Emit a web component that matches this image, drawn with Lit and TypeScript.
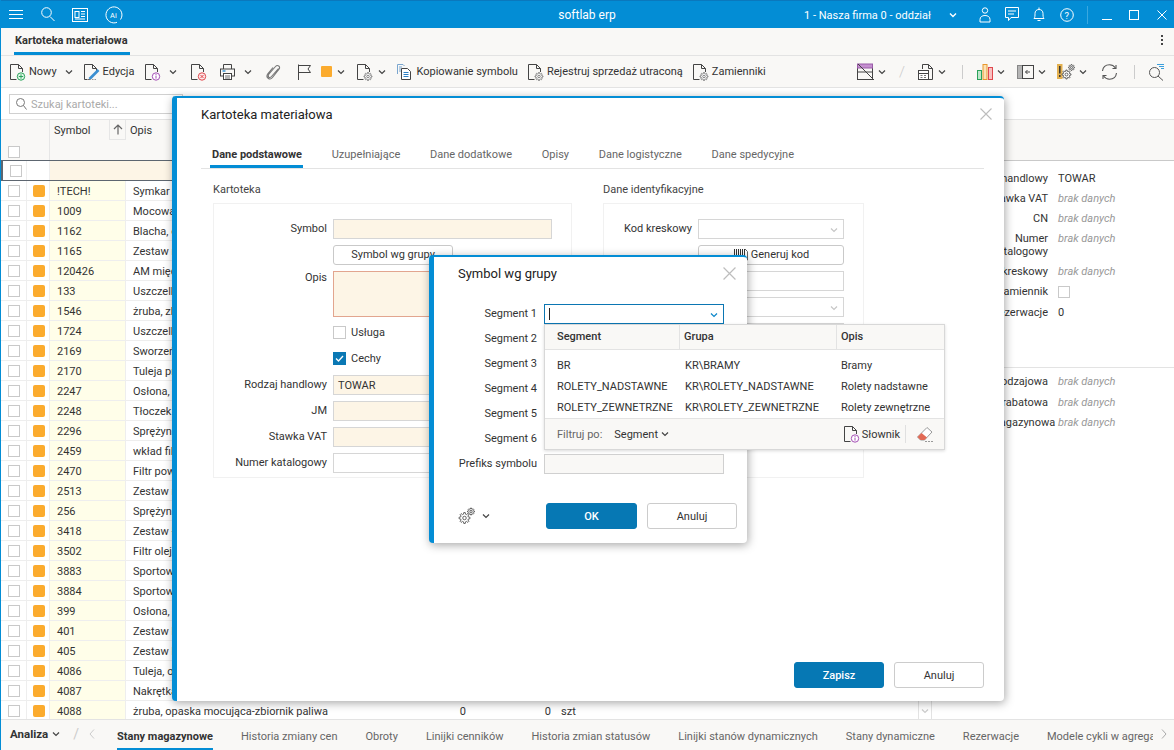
import { LitElement, html, css, svg } from "lit";
import { customElement } from "lit/decorators.js";

const s = (w: number, h: number, body: unknown, cls = "") =>
  html`<svg class="ic ${cls}" width=${w} height=${h} viewBox="0 0 ${w} ${h}" fill="none">${body}</svg>`;

const page = svg`<path d="M7.5 16.5H1.5V1.5H9.500L13.500 5.500V9M9.500 1.500V5.500H13.500" stroke="#444"/>`;
const gearD = (cx: number, cy: number, r: number) => {
  const pts: string[] = [];
  const n = 8;
  for (let k = 0; k < n; k++) {
    const a = (k / n) * Math.PI * 2;
    const d = Math.PI / n;
    const p = (rad: number, ang: number) => `${(cx + rad * Math.cos(ang)).toFixed(2)} ${(cy + rad * Math.sin(ang)).toFixed(2)}`;
    pts.push(p(r * 0.72, a - d * 0.65), p(r, a - d * 0.35), p(r, a + d * 0.35), p(r * 0.72, a + d * 0.65));
  }
  return "M" + pts.join("L") + "Z";
};
const gear = (x: number, y: number, r = 4, c = "#777") =>
  svg`<path d=${gearD(x, y, r)} stroke=${c} stroke-width=".9" fill="#fff"/><circle cx=${x} cy=${y} r=${r * 0.32} stroke=${c} stroke-width=".9"/>`;
const chevPath = svg`<path d="M1 1.5L4 4.500L7 1.500" stroke="#444" stroke-width="1.2"/>`;
const chev = html`<svg class="chev" width="8" height="6" viewBox="0 0 8 6" fill="none">${chevPath}</svg>`;

const icons: Record<string, unknown> = {
  add: s(17, 18, svg`${page}<circle cx="12" cy="13.500" r="3.700" stroke="#2aa35a" fill="#e4f7ea"/><path d="M12 11.300v4.400M9.800 13.500h4.400" stroke="#2aa35a"/>`),
  edit: s(17, 18, svg`${page}<path d="M6.500 16L15.500 7" stroke="#3b8fd1" stroke-width="2.600"/><path d="M4 16.500h9" stroke="#999" stroke-dasharray="1.500 1"/>`),
  info: s(17, 18, svg`${page}<circle cx="12" cy="13.500" r="3.700" stroke="#a34fb5" fill="#fff"/><path d="M12 12.600v3M12 10.900v1" stroke="#a34fb5"/>`),
  del: s(17, 18, svg`${page}<circle cx="12" cy="13.500" r="3.700" stroke="#e0484d" fill="#fde8e8"/><path d="M10.500 12l3 3M13.500 12l-3 3" stroke="#e0484d"/>`),
  print: s(17, 18, svg`<path d="M4.500 6V1.500H12.500V6" stroke="#444"/><rect x="1.500" y="6" width="14" height="7" stroke="#444"/><path d="M3.500 8h3" stroke="#2c8fd1" stroke-width="1.400"/><rect x="4.500" y="10.500" width="8" height="6" fill="#fff" stroke="#444"/><path d="M6 13h5M6 15h5" stroke="#444" stroke-width=".8"/>`),
  clip: s(17, 18, svg`<path d="M13.500 5.500L6.500 13.500C4.500 15.800 2 13.500 4 11L10.500 3.500C12.500 1.200 16 3.500 14 6.200L7.500 14.500C4.800 17.800.2 14.500 2.800 10.800L8 4.500" stroke="#777" stroke-width="1.100"/>`),
  flag: s(15, 18, svg`<path d="M1.500 17V1.500" stroke="#444"/><path d="M1.500 2.500H13.500L11 6L13.500 9.500H1.500" stroke="#444"/>`),
  docGear: s(17, 18, svg`${page}${gear(12, 13.500)}`),
  copy: s(17, 18, svg`<path d="M1.500 11V1.500H7L8.500 3" stroke="#7aa6cf"/><path d="M3 4h3M3 6h2M3 8h2" stroke="#7aa6cf"/><path d="M5.500 16.500V5.500H11.500L14.500 8.500V16.500Z" stroke="#444" fill="#fff"/><path d="M7.500 9.500h5M7.500 11.500h5M7.500 13.500h5" stroke="#2c7fc4"/>`),
  noView: s(18, 18, svg`<rect x=".5" y="2.500" width="15" height="14" stroke="#444"/><rect x=".5" y="1" width="15" height="4" fill="#c58fd0" stroke="#9a5ca8"/><path d="M.5 9h15" stroke="#444"/><path d="M1 1L17 17" stroke="#444"/>`),
  docTable: s(17, 18, svg`<path d="M5.500 6V1.500H11.500L15.500 5.500V16.500H12" stroke="#444"/><path d="M11.500 1.500V5.500H15.500" stroke="#444"/><rect x="1.500" y="7.500" width="10" height="9" fill="#fff" stroke="#444"/><path d="M1.500 10.500h10" stroke="#444"/><path d="M3.500 12.500h2M7 12.500h2M3.500 14.500h2M7 14.500h2" stroke="#777"/>`),
  chart: s(17, 18, svg`<rect x=".5" y="7.500" width="4" height="9" fill="#bfe6cb" stroke="#2aa35a"/><rect x="6" y="1.500" width="4" height="15" fill="#fce2b5" stroke="#e8982e"/><rect x="11.500" y="4.500" width="4" height="12" fill="#f8c0c0" stroke="#e0484d"/>`),
  panel: s(17, 18, svg`<rect x=".5" y="2.500" width="5" height="13" fill="#b5b5b5" stroke="#888"/><rect x="5.500" y="2.500" width="11" height="13" stroke="#444"/><path d="M13 9H8.500M10.500 7L8.500 9L10.500 11" stroke="#444"/>`),
  warn: s(18, 18, svg`<rect x="0" y="1" width="5.500" height="15" fill="#e3b04f"/><path d="M2.800 3v7.500M2.800 12v2" stroke="#333" stroke-width="1.500"/>${gear(9.500, 11.500, 4.500, "#555")}${gear(14.500, 4.500, 3, "#555")}`),
  refresh: s(17, 18, svg`<path d="M1.500 8C2 4 5 1.800 8.500 1.800C11 1.800 13 3 14.500 5M15.500 10C15 14 12 16.200 8.500 16.200C6 16.200 4 15 2.500 13" stroke="#555" stroke-width="1.100"/><path d="M11.500 5.500H15V2M5.500 12.500H2V16" stroke="#555" stroke-width="1.100"/>`),
  searchList: s(17, 18, svg`<circle cx="6.500" cy="9.500" r="5" stroke="#555"/><path d="M10 13L15 17.500" stroke="#555"/><path d="M9 1.500h7M11 3.500h5M13 5.500h3" stroke="#3b9fdc"/>`),
};

const leftTools = [
  { i: "add", t: "Nowy", c: 1, ml: "nowy" },
  { i: "edit", t: "Edycja", c: 0, ml: "m10" },
  { i: "info", t: "", c: 1, ml: "m10" },
  { i: "del", t: "", c: 0, ml: "m13" },
  { i: "print", t: "", c: 1, ml: "m12" },
  { i: "clip", t: "", c: 0, ml: "m13" },
  { i: "flag", t: "", c: 0, ml: "m15" },
  { i: "orange", t: "", c: 1, ml: "m9 tight" },
  { i: "docGear", t: "", c: 1, ml: "m11 tight" },
  { i: "copy", t: "Kopiowanie symbolu", c: 0, ml: "m10" },
  { i: "docGear", t: "Rejestruj sprzedaż utraconą", c: 0, ml: "m9" },
  { i: "docGear", t: "Zamienniki", c: 0, ml: "m9" },
];

const rightTools: [unknown, string][] = [
  [icons.noView, ""], [chev, "m3"],
  [html`<span class="slash">/</span>`, "m13"],
  [icons.docTable, "m12"], [chev, "m4"],
  [html`<span class="vsep"></span>`, "m16"],
  [icons.chart, "m14"], [chev, "m3"],
  [icons.panel, "m12"], [chev, "m4"],
  [icons.warn, "m11"], [chev, "m4"],
  [icons.refresh, "m14"],
  [html`<span class="vsep"></span>`, "m16"],
  [icons.searchList, "m13"],
];

const rows: [string, string][] = [
  ["!TECH!", "Symkar uszczelka"], ["1009", "Mocowanie silnika"], ["1162", "Blacha, osłona"], ["1165", "Zestaw naprawczy"],
  ["120426", "AM między osłona"], ["133", "Uszczelka pokrywy"], ["1546", "żruba, zbiornik"], ["1724", "Uszczelka"],
  ["2169", "Sworzeń wahacza"], ["2170", "Tuleja przednia"], ["2247", "Osłona, wał"], ["2248", "Tłoczek hamulca"],
  ["2296", "Sprężyna"], ["2459", "wkład filtra"], ["2470", "Filtr powietrza"], ["2513", "Zestaw naprawczy"],
  ["256", "Sprężyna"], ["3418", "Zestaw łożysk"], ["3502", "Filtr oleju"], ["3883", "Sportowy tłumik"],
  ["3884", "Sportowy filtr"], ["399", "Osłona, łańcuch"], ["401", "Zestaw kół"], ["405", "Zestaw kół"],
  ["4086", "Tuleja, oś"], ["4087", "Nakrętka"], ["4088", "żruba, opaska mocująca-zbiornik paliwa"],
];

const props1: [string, string, boolean][] = [
  ["Rodzaj handlowy", "TOWAR", false], ["Stawka VAT", "brak danych", true], ["CN", "brak danych", true],
  ["Numer katalogowy", "brak danych", true], ["Kod kreskowy", "brak danych", true], ["Zamiennik", "", false], ["Rezerwacje", "0", false],
];
const props2 = ["Grupa rodzajowa", "Grupa rabatowa", "Grupa magazynowa"];
const bottomTabs = ["Historia zmiany cen", "Obroty", "Linijki cenników", "Historia zmian statusów", "Linijki stanów dynamicznych", "Stany dynamiczne", "Rezerwacje"];
const modalTabs = ["Uzupełniające", "Dane dodatkowe", "Opisy", "Dane logistyczne", "Dane spedycyjne"];
const ddRows = [
  ["BR", "KR\\BRAMY", "Bramy"],
  ["ROLETY_NADSTAWNE", "KR\\ROLETY_NADSTAWNE", "Rolety nadstawne"],
  ["ROLETY_ZEWNETRZNE", "KR\\ROLETY_ZEWNETRZNE", "Rolety zewnętrzne"],
];

const closeX = (size: number) =>
  html`<svg class="close" width=${size} height=${size} viewBox="0 0 12 12" fill="none"><path d="M.5.5l11 11M11.500.5l-11 11" stroke="#bdbdbd" stroke-width="1.100"/></svg>`;

@customElement("app-root")
export class AppRoot extends LitElement {
  static styles = css`
    :host { display: block; width: 1174px; height: 750px; font: 11px Roboto, sans-serif; color: #333; }
    * { box-sizing: border-box; }
    .app { position: relative; width: 1174px; height: 750px; overflow: hidden; display: flex; flex-direction: column; background: #fff; border-left: 1px solid #038dd5; }
    .ic, .chev, .close { flex: none; display: block; }

    .title { height: 28px; margin-left: -1px; background: #038dd5; border-top: 1px solid #0a78bd; display: grid; grid-template-columns: 1fr auto 1fr; align-items: center; color: #fff; }
    .tl, .tr { display: flex; align-items: center; }
    .tl { padding-left: 9px; gap: 17px; }
    .tl .ham { margin-right: 1px; }
    .tc { font-size: 12px; padding-top: 1px; }
    .tr { justify-content: flex-end; padding-right: 7px; }
    .firm { font-size: 11px; padding-top: 1px; margin-right: 18px; }
    .mr14 { margin-right: 14px; } .mr15 { margin-right: 15px; } .mr17 { margin-right: 17px; } .mr18 { margin-right: 18px; } .mr22 { margin-right: 22px; }
    .tsep { width: 1px; height: 18px; background: #3aa8e0; margin: 0 14px 0 13px; }

    .tabbar { height: 28px; background: #f9f8f6; border-bottom: 1px solid #e3e3e3; display: flex; align-items: flex-end; justify-content: space-between; padding-left: 13px; }
    .tab-main { font-weight: 700; font-size: 11px; color: #333; padding: 0 1px; height: 27px; line-height: 25px; border-bottom: 3px solid #038dd5; width: 116px; white-space: nowrap; }
    .dots { display: flex; flex-direction: column; gap: 2px; margin: 0 11px 10px 0; }
    .dots i { width: 2px; height: 2px; background: #444; }

    .toolbar { height: 32px; background: #f9f8f6; border-bottom: 1px solid #e3e3e3; display: flex; align-items: center; padding-left: 8px; }
    .tool { display: flex; align-items: center; gap: 3px; white-space: nowrap; color: #333; flex: none; }
    .tool .chev { margin-left: 5px; }
    .tool.tight .chev { margin-left: 2px; }
    .tool.nowy .chev { margin-left: 5px; }
    .tright .tool .chev { margin-left: 0; }
    .m3 { margin-left: 3px; } .m4 { margin-left: 4px; } .m9 { margin-left: 9px; } .m10 { margin-left: 10px; } .m11 { margin-left: 11px; } .m12 { margin-left: 12px; } .m13 { margin-left: 13px; } .m14 { margin-left: 14px; } .m15 { margin-left: 15px; } .m16 { margin-left: 16px; }
    .orange { width: 11px; height: 11px; border-radius: 1px; background: #fbab2e; }
    .tright { margin-left: auto; display: flex; align-items: center; padding-right: 9px; }
    .slash { color: #ccc; font-size: 15px; width: 6px; font-weight: 300; display: block; }
    .vsep { width: 1px; height: 14px; background: #ccc; display: block; }

    .main { flex: 1; min-height: 0; display: flex; flex-direction: column; }
    .searchrow { height: 32px; flex: none; border-bottom: 1px solid #e3e3e3; padding: 6px 0 0 8px; }
    .search { width: 174px; height: 20px; border: 1px solid #d0d0d0; display: flex; align-items: center; gap: 4px; padding-left: 6px; color: #aaa; }
    .content { flex: 1; min-height: 0; display: flex; }
    .gridwrap { width: 931px; flex: none; display: flex; flex-direction: column; overflow: hidden; position: relative; }
    .r { display: grid; grid-template-columns: 26px 23px 76px 300px 44px 85px 1fr; height: 20px; align-items: stretch; border-bottom: 1px solid #eee; flex: none; }
    .r > div { display: flex; align-items: center; white-space: nowrap; overflow: hidden; border-right: 1px solid #eee; padding-top: 1px; }
    .r > div.open { border-right: none; }
    .cbc { padding-left: 7px; }
    .cb { width: 12px; height: 12px; border: 1px solid #c9c9c9; background: #fff; flex: none; display: block; }
    .sq { width: 12px; height: 12px; background: #fbab2e; border-radius: 2px; margin-left: 6px; }
    .sym { background: #fffee9; padding-left: 7px; }
    .desc { padding-left: 7px; }
    .num { justify-content: flex-end; padding-right: 4px; }
    .jm { padding-left: 6px; padding-right: 0; }
    .head { height: 41px; background: #f9f8f6; display: grid; grid-template-columns: 26px 23px 59px 17px 1fr; border-bottom: 1px solid #e3e3e3; flex: none; }
    .head > div { border-right: 1px solid #e6e6e6; padding-top: 4px; }
    .head .hcb { padding: 26px 0 0 7px; border-right: none; }
    .head .hsym { padding-left: 4px; border-left: 1px solid #e6e6e6; border-right: none; margin-left: -1px; }
    .head .sort { height: 20px; border-left: 1px solid #e6e6e6; border-bottom: 1px solid #e6e6e6; padding: 4px 0 0 3px; }
    .head .hop { padding-left: 4px; border-right: none; }
    .filter { height: 21px; border-top: 1px solid #5d6670; border-bottom: 1px solid #5d6670; border-left: 2px solid #5d6670; margin-top: -1px; grid-template-columns: 24px 23px 1fr; }
    .filter > div { border-right: 1px solid #eee; }
    .filter .fill { background: #fdf5e6; border-right: none; }
    .bodyrows { flex: 1; min-height: 0; overflow: hidden; display: flex; flex-direction: column; }
    .sb { position: absolute; right: 0; top: 0; bottom: 0; width: 14px; border-left: 1px solid #e3e3e3; border-right: 1px solid #e3e3e3; background: #fff; display: flex; align-items: flex-end; justify-content: center; padding-bottom: 5px; }
    .sb .chev path { stroke: #ccc; }
    .side { flex: 1; min-width: 0; }
    .sidehead { height: 41px; background: #f9f8f6; border-bottom: 1px solid #c9c9c9; }
    .props { padding: 11px 0 0 32px; display: grid; grid-template-columns: 84px 1fr; column-gap: 10px; row-gap: 7px; line-height: 13px; align-items: start; }
    .props .l { text-align: right; }
    .na { font-style: italic; color: #999; }
    .props2 { margin-top: 48px; border-top: 1px solid #e3e3e3; padding: 7px 0 0 26px; grid-template-columns: 90px 1fr; row-gap: 7.500px; }
    .props2 .l { white-space: nowrap; }
    .props .cb { margin: 1px 0; }

    .bottom { height: 31px; flex: none; background: #f9f8f6; border-top: 1px solid #e3e3e3; display: flex; align-items: stretch; padding-left: 9px; position: relative; }
    .ana { font-weight: 700; display: flex; align-items: center; gap: 4px; font-size: 11.500px; padding-bottom: 2px; }
    .bslash { color: #ccc; align-self: center; margin: 0 0 2px 13px; font-size: 14px; }
    .blt { align-self: center; margin: 0 22px 2px 10px; }
    .btabs { flex: 1; min-width: 0; display: flex; gap: 28px; overflow: hidden; white-space: nowrap; margin-right: 21px; }
    .btab { color: #666; line-height: 33px; font-size: 11px; flex: none; }
    .btab.on { font-weight: 700; color: #333; border-bottom: 3px solid #038dd5; height: 31px; }
    .brt { position: absolute; right: 7px; top: 9px; }

    .modal { position: absolute; background: #fff; border-left: 5px solid #038dd5; border-top: 2px solid #038dd5; border-radius: 4px; box-shadow: 1px 2px 10px rgba(0,0,0,.35); display: flex; flex-direction: column; }
    .m1 { left: 171px; top: 96px; width: 832px; height: 605px; padding: 0 20px 13px 24px; }
    .m2 { left: 428px; top: 255px; width: 318px; height: 288px; padding: 0 10px 14px 19px; }
    .mhead { display: flex; justify-content: space-between; align-items: center; }
    .m1 .mhead { height: 32px; }
    .m1 .mhead .close { margin-right: -8px; }
    .mtitle { font-size: 13px; color: #222; }
    .m2 .mhead { height: 32px; padding: 0 1px 0 5px; }
    .mtabs { display: flex; gap: 29.700px; margin-top: 18px; padding: 0 0 0 11px; border-bottom: 1px solid #e3e3e3; height: 21px; color: #666; white-space: nowrap; }
    .mtab.on { font-weight: 700; color: #333; height: 20px; border-bottom: 3px solid #038dd5; margin-left: -2px; padding: 0 1px 0 2px; margin-right: -1px; }
    .cols { display: grid; grid-template-columns: 359px 261px; gap: 31px; margin: 14px 0 0 12px; }
    .sect { color: #444; height: 20px; }
    .box { border: 1px solid #f1f1f1; height: 275px; display: grid; row-gap: 6px; align-content: start; padding-top: 15px; }
    .lbox { grid-template-columns: 113px 219px; column-gap: 6px; }
    .rbox { grid-template-columns: 88px 146px; column-gap: 6px; }
    .lb { text-align: right; line-height: 20px; white-space: nowrap; }
    .lb.top { line-height: 13px; }
    .fld { height: 20px; border: 1px solid #d6d6d6; background: #fff; position: relative; display: flex; align-items: center; padding-left: 4px; }
    .fld.req { background: #fdf5e6; }
    .fld.area { height: 46px; border-color: #e2a58f; }
    .fld.ro { background: #f9f8f6; border-color: #d0d0d0; }
    .fld > .chev { position: absolute; right: 5px; top: 7px; }
    .fld > .chev path { stroke: #c6c6c6; }
    .btnf { height: 20px; border: 1px solid #c9c9c9; border-radius: 3px; background: #fff; display: flex; align-items: center; justify-content: center; gap: 2px; padding-bottom: 1px; }
    .wsmall { width: 120px; }
    .chk { display: flex; align-items: center; gap: 5px; height: 20px; padding-bottom: 1px; }
    .chk .cb { width: 13px; height: 13px; }
    .cb.on { background: #0a78b4; border-color: #0a78b4; }
    .cb svg { display: block; }
    .mfoot { margin-top: auto; display: flex; justify-content: flex-end; gap: 10px; align-items: center; }
    .btn { width: 90px; height: 26px; border-radius: 3px; display: flex; align-items: center; justify-content: center; border: 1px solid #ccc; background: #fff; flex: none; }
    .btn.pri { background: #0678b4; border-color: #0678b4; color: #fff; font-weight: 500; }

    .m2grid { display: grid; grid-template-columns: 84px 180px; column-gap: 7px; row-gap: 5px; margin-top: 15px; }
    .m2grid .fld.focus { border-color: #0b76b3; }
    .m2grid .fld.focus > .chev path { stroke: #0b86c9; }
    .caret { width: 1px; height: 12px; background: #222; }
    .m2 .mfoot { justify-content: flex-start; gap: 10px; }
    .gearb { display: flex; align-items: center; gap: 7px; width: 83px; padding-left: 5px; }
    .m2 .btn.pri { width: 91px; }

    .dd { position: absolute; left: -1px; top: 19px; width: 401px; height: 126px; background: #fff; border: 1px solid #d8d8d8; box-shadow: 0 1px 3px rgba(0,0,0,.15); z-index: 2; display: flex; flex-direction: column; }
    .ddr { display: grid; grid-template-columns: 135px 157px 1fr; }
    .ddh { height: 25px; background: #f9f8f6; border-bottom: 1px solid #e3e3e3; line-height: 24px; font-weight: 500; }
    .ddh span { border-right: 1px solid #e3e3e3; padding-left: 12px; }
    .ddh span + span { padding-left: 4px; }
    .ddh span:last-child { border: none; }
    .ddbody { flex: 1; padding-top: 5px; }
    .ddb { height: 21px; line-height: 21px; white-space: nowrap; }
    .ddb span { padding-left: 12px; }
    .ddb span + span { padding-left: 5px; }
    .ddb span:last-child { padding-left: 4px; }
    .ddf { height: 32px; background: #f9f8f6; border-top: 1px solid #e3e3e3; display: flex; align-items: center; padding-left: 12px; }
    .ddf .fl { color: #666; margin-right: 12px; }
    .ddf .seg { display: flex; align-items: center; gap: 3px; }
    .ddf .dict { margin-left: auto; display: flex; align-items: center; gap: 2px; }
    .ddf .sp { width: 1px; height: 18px; background: #e0e0e0; margin: 0 10px 0 5px; }
    .ddf .er { margin-right: 11px; }
  `;

  private tool(t: { i: string; t: string; c: number; ml: string }) {
    const icon = t.i === "orange" ? html`<span class="orange"></span>` : icons[t.i];
    return html`<div class="tool ${t.ml}">${icon}${t.t ? html`<span>${t.t}</span>` : ""}${t.c ? chev : ""}</div>`;
  }

  private titleBar() {
    return html`<div class="title">
      <div class="tl">
        <svg class="ham" width="14" height="12" viewBox="0 0 14 12"><path d="M0 1.500h14M0 5.500h14M0 9.500h14" stroke="#fff"/></svg>
        <svg width="14" height="15" viewBox="0 0 14 15" fill="none"><circle cx="5.500" cy="5.500" r="4.800" stroke="#fff"/><path d="M9 9.500l4.500 4.500" stroke="#fff"/></svg>
        <svg width="16" height="14" viewBox="0 0 16 14" fill="none"><rect x=".5" y=".5" width="15" height="13" stroke="#fff"/><rect x="3" y="3.500" width="4" height="6" stroke="#fff"/><path d="M9 3.500h4M9 6h4M9 8.500h4M3 11h10" stroke="#fff"/></svg>
        <svg width="18" height="18" viewBox="0 0 18 18" fill="none"><path d="M12 16.300A8 8 0 1 1 15.500 13.500" stroke="#fff"/><text x="5" y="12" font-size="7.500" font-family="Roboto" fill="#fff">Ai</text></svg>
      </div>
      <div class="tc">softlab erp</div>
      <div class="tr">
        <span class="firm">1 - Nasza firma 0 - oddział</span>
        <svg class="mr22" width="8" height="6" viewBox="0 0 8 6" fill="none"><path d="M1 1.500L4 4.500L7 1.500" stroke="#fff" stroke-width="1.400"/></svg>
        <svg class="mr14" width="12" height="16" viewBox="0 0 12 16" fill="none"><circle cx="6" cy="3.500" r="2.700" stroke="#fff"/><path d="M1 15v-2.500C1 10 3 8.500 6 8.500s5 1.500 5 4V15z" stroke="#fff"/></svg>
        <svg class="mr14" width="14" height="15" viewBox="0 0 14 15" fill="none"><path d="M.5.5h13v10H6L3.500 13.500v-3h-3z" stroke="#fff"/><path d="M3 4h8M3 7h6" stroke="#fff"/></svg>
        <svg class="mr15" width="12" height="15" viewBox="0 0 12 15" fill="none"><path d="M1 11.500c1-1 1-3 1-5 0-2.500 1.500-4 4-4s4 1.500 4 4c0 2 0 4 1 5zM6 .5v2M4.500 13.500h3" stroke="#fff"/></svg>
        <svg width="14" height="14" viewBox="0 0 14 14" fill="none"><circle cx="7" cy="7" r="6.300" stroke="#fff"/><text x="4.500" y="10.500" font-size="9.500" font-family="Roboto" fill="#fff">?</text></svg>
        <span class="tsep"></span>
        <svg class="mr17" width="10" height="10" viewBox="0 0 10 10"><path d="M0 9.500h10" stroke="#fff"/></svg>
        <svg class="mr18" width="10" height="10" viewBox="0 0 10 10" fill="none"><rect x=".5" y=".5" width="9" height="9" stroke="#fff"/></svg>
        <svg width="10" height="10" viewBox="0 0 10 10"><path d="M.5.500l9 9M9.500.500l-9 9" stroke="#fff"/></svg>
      </div>
    </div>`;
  }

  private toolbar() {
    return html`<div class="toolbar">
      ${leftTools.map((t) => this.tool(t))}
      <div class="tright">
        ${rightTools.map(([c, m]) => html`<div class="tool ${m}">${c}</div>`)}
      </div>
    </div>`;
  }

  private grid() {
    return html`<div class="gridwrap">
      <div class="head">
        <div class="hcb"><span class="cb"></span></div>
        <div></div>
        <div class="hsym">Symbol</div>
        <div class="sort"><svg width="10" height="11" viewBox="0 0 10 11" fill="none"><path d="M5 10.500V1M1 5l4-4 4 4" stroke="#666" stroke-width="1.200"/></svg></div>
        <div class="hop">Opis</div>
      </div>
      <div class="r filter"><div class="cbc"><span class="cb"></span></div><div></div><div class="fill"></div></div>
      <div class="bodyrows">
        ${rows.map(([a, b], i) => html`<div class="r">
          <div class="cbc"><span class="cb"></span></div>
          <div><span class="sq"></span></div>
          <div class="sym">${a}</div>
          <div class="desc open">${b}</div>
          <div class="num open">${i === rows.length - 1 ? "0" : ""}</div>
          <div class="num open">${i === rows.length - 1 ? "0" : ""}</div>
          <div class="jm open">${i === rows.length - 1 ? "szt" : ""}</div>
        </div>`)}
      </div>
      <div class="sb">${chev}</div>
    </div>`;
  }

  private side() {
    return html`<div class="side">
      <div class="sidehead"></div>
      <div class="props">
        ${props1.map(([l, v, na], i) => html`<div class="l">${l}</div>${i === 5 ? html`<span class="cb"></span>` : html`<div class=${na ? "na" : ""}>${v}</div>`}`)}
      </div>
      <div class="props props2">
        ${props2.map((l) => html`<div class="l">${l}</div><div class="na">brak danych</div>`)}
      </div>
    </div>`;
  }

  private bottom() {
    return html`<div class="bottom">
      <div class="ana">Analiza ${chev}</div>
      <span class="bslash">/</span>
      <svg class="blt" width="6" height="10" viewBox="0 0 6 10" fill="none"><path d="M5 .5L1 5l4 4.500" stroke="#ccc"/></svg>
      <div class="btabs">
        <div class="btab on">Stany magazynowe</div>
        ${bottomTabs.map((t) => html`<div class="btab">${t}</div>`)}
        <div class="btab">Modele cykli w agregacie</div>
      </div>
      <svg class="brt" width="6" height="10" viewBox="0 0 6 10" fill="none"><path d="M1 .5L5 5 1 9.500" stroke="#aaa"/></svg>
    </div>`;
  }

  private modal1() {
    return html`<div class="modal m1">
      <div class="mhead"><div class="mtitle">Kartoteka materiałowa</div>${closeX(12)}</div>
      <div class="mtabs"><div class="mtab on">Dane podstawowe</div>${modalTabs.map((t) => html`<div class="mtab">${t}</div>`)}</div>
      <div class="cols">
        <div>
          <div class="sect">Kartoteka</div>
          <div class="box lbox">
            <div class="lb">Symbol</div><div class="fld req"></div>
            <div></div><div class="btnf wsmall">Symbol wg grupy</div>
            <div class="lb top">Opis</div><div class="fld req area"></div>
            <div></div><div class="chk"><span class="cb"></span>Usługa</div>
            <div></div><div class="chk"><span class="cb on"><svg width="11" height="11" viewBox="0 0 11 11" fill="none"><path d="M2 5.500L4.500 8L9 3" stroke="#fff" stroke-width="1.300"/></svg></span>Cechy</div>
            <div class="lb">Rodzaj handlowy</div><div class="fld req">TOWAR</div>
            <div class="lb">JM</div><div class="fld req"></div>
            <div class="lb">Stawka VAT</div><div class="fld req"></div>
            <div class="lb">Numer katalogowy</div><div class="fld"></div>
          </div>
        </div>
        <div>
          <div class="sect">Dane identyfikacyjne</div>
          <div class="box rbox">
            <div class="lb">Kod kreskowy</div><div class="fld">${chev}</div>
            <div></div><div class="btnf"><svg width="16" height="15" viewBox="0 0 16 15" fill="none"><path d="M1.500 2v10M3.500 2v10M5.500 2v10M7.500 2v10M9.500 2v10M11.500 2v10" stroke="#333"/><path d="M12 2l2.500 2.500V13h-3" stroke="#666"/></svg>Generuj kod</div>
            <div></div><div class="fld"></div>
            <div></div><div class="fld">${chev}</div>
            <div></div><div class="fld"></div>
          </div>
        </div>
      </div>
      <div class="mfoot"><div class="btn pri">Zapisz</div><div class="btn">Anuluj</div></div>
    </div>`;
  }

  private modal2() {
    return html`<div class="modal m2">
      <div class="mhead"><div class="mtitle">Symbol wg grupy</div>${closeX(13)}</div>
      <div class="m2grid">
        <div class="lb">Segment 1</div>
        <div class="fld focus"><span class="caret"></span>${chev}
          <div class="dd">
            <div class="ddr ddh"><span>Segment</span><span>Grupa</span><span>Opis</span></div>
            <div class="ddbody">${ddRows.map((r) => html`<div class="ddr ddb"><span>${r[0]}</span><span>${r[1]}</span><span>${r[2]}</span></div>`)}</div>
            <div class="ddf">
              <span class="fl">Filtruj po:</span><span class="seg">Segment ${chev}</span>
              <span class="dict">${icons.info}Słownik</span><span class="sp"></span>
              <svg class="er" width="17" height="17" viewBox="0 0 17 17" fill="none"><path d="M1.500 11L11 1.500l5 4.500-7.500 8H4.500z" fill="#fff" stroke="#999"/><path d="M1.500 11l4-4 5.500 4.500-2.500 2.500H4.500z" fill="#e26a55"/><path d="M9 15.500h8" stroke="#999" stroke-dasharray="2 1"/></svg>
            </div>
          </div>
        </div>
        ${[2, 3, 4, 5, 6].map((n) => html`<div class="lb">Segment ${n}</div><div class="fld"></div>`)}
        <div class="lb">Prefiks symbolu</div><div class="fld ro"></div>
      </div>
      <div class="mfoot">
        <div class="gearb"><svg width="17" height="18" viewBox="0 0 17 18" fill="none">${gear(6.500, 11, 5.500, "#555")}${gear(13, 4.500, 3.500, "#555")}</svg>${chev}</div>
        <div class="btn pri">OK</div><div class="btn">Anuluj</div>
      </div>
    </div>`;
  }

  render() {
    return html`<div class="app">
      ${this.titleBar()}
      <div class="tabbar"><div class="tab-main">Kartoteka materiałowa</div><div class="dots"><i></i><i></i><i></i></div></div>
      ${this.toolbar()}
      <div class="main">
        <div class="searchrow"><div class="search"><svg width="11" height="12" viewBox="0 0 11 12" fill="none"><circle cx="4.500" cy="4.500" r="4" stroke="#777"/><path d="M7.500 7.500l3 4" stroke="#777"/></svg>Szukaj kartoteki...</div></div>
        <div class="content">${this.grid()}${this.side()}</div>
      </div>
      ${this.bottom()}
      ${this.modal1()}
      ${this.modal2()}
    </div>`;
  }
}
